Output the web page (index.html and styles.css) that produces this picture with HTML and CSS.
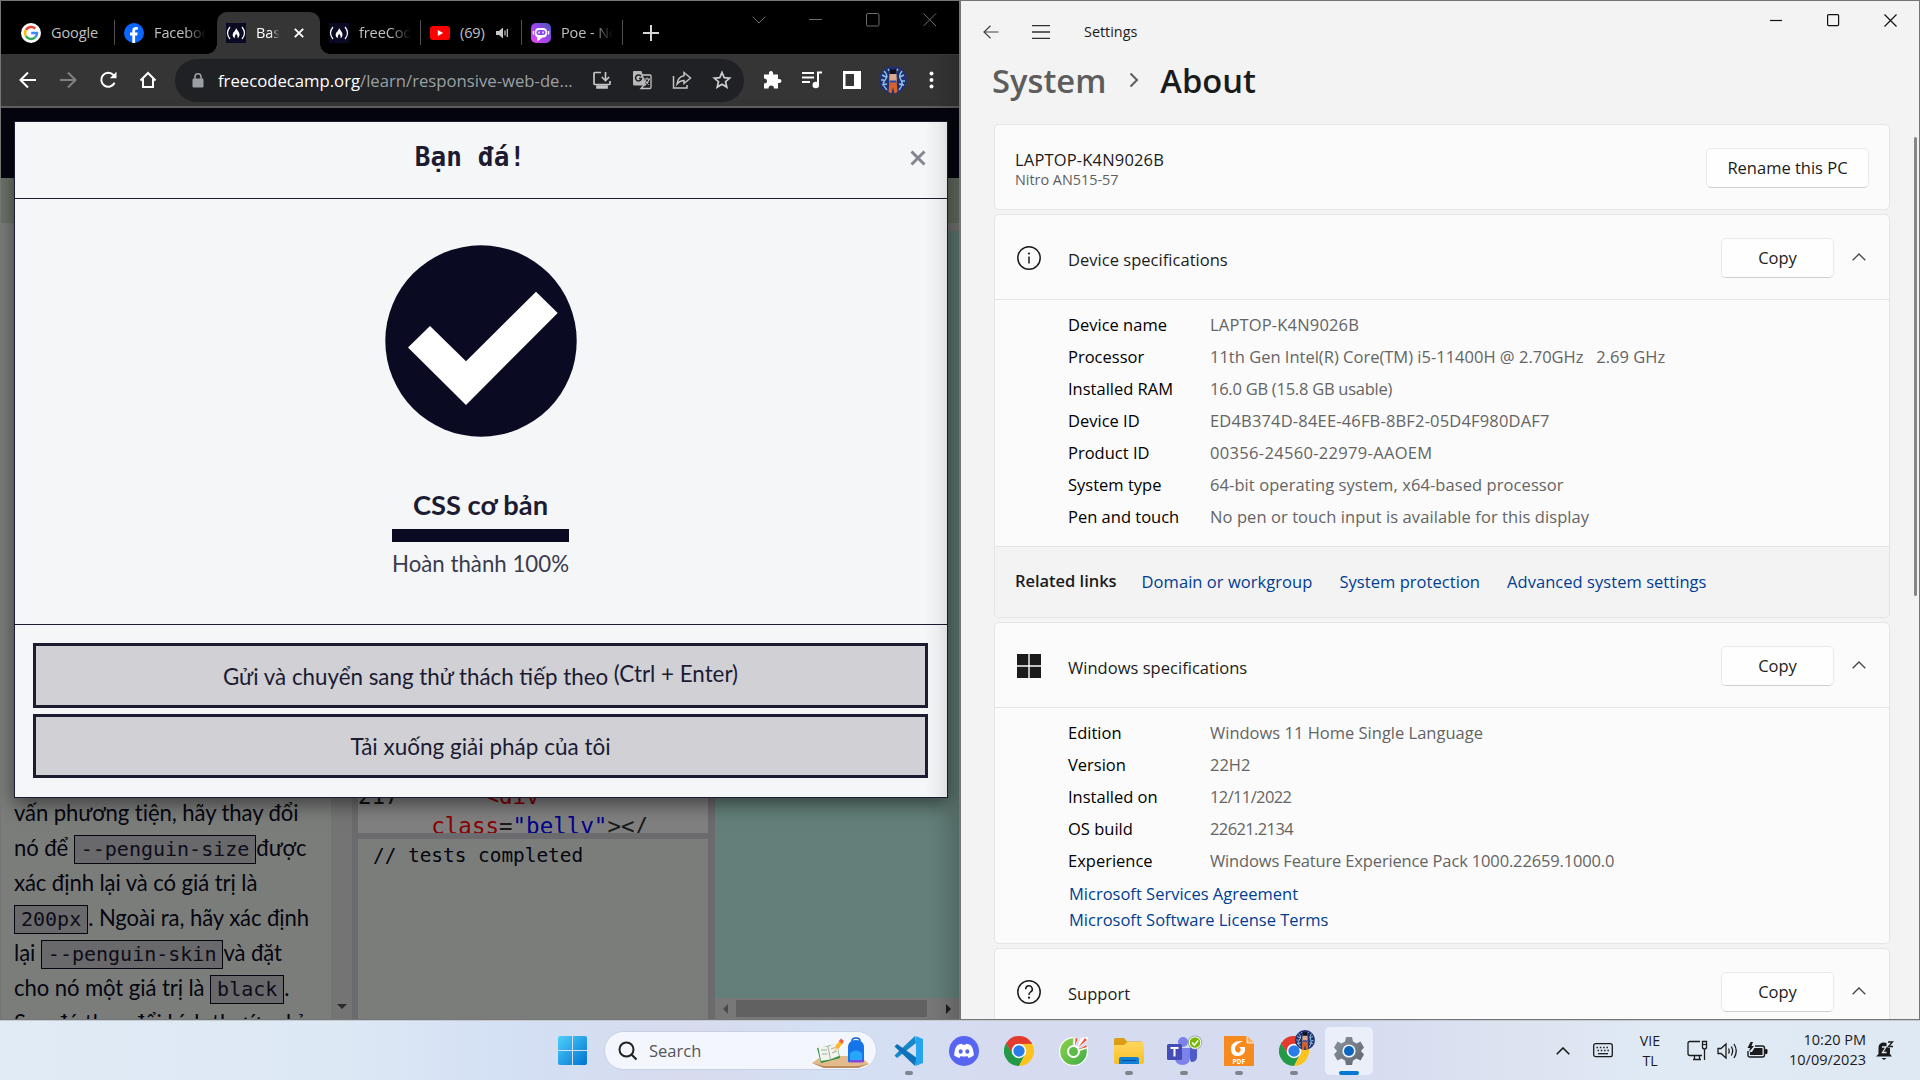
FILE: index.html
```html
<!DOCTYPE html>
<html lang="vi">
<head>
<meta charset="utf-8">
<title>Desktop</title>
<link rel="stylesheet" href="styles.css">
</head>
<body>
<svg width="0" height="0" class="defs">
  <defs>
    <linearGradient id="gWin" x1="0" y1="0" x2="1" y2="1"><stop offset="0" stop-color="#4fd0fb"/><stop offset="1" stop-color="#0072d1"/></linearGradient>
    <linearGradient id="gPoe" x1="0" y1="1" x2="1" y2="0"><stop offset="0" stop-color="#e94af5"/><stop offset=".5" stop-color="#9a45ee"/><stop offset="1" stop-color="#4757b5"/></linearGradient>
    <linearGradient id="gCoc" x1="0" y1="0" x2="1" y2="1"><stop offset="0" stop-color="#8fd14a"/><stop offset="1" stop-color="#3fae49"/></linearGradient>
    <linearGradient id="gFold" x1="0" y1="0" x2="0" y2="1"><stop offset="0" stop-color="#ffd75e"/><stop offset="1" stop-color="#f9bf26"/></linearGradient>
    <linearGradient id="gGear" x1="0" y1="0" x2="1" y2="1"><stop offset="0" stop-color="#8b949c"/><stop offset="1" stop-color="#5d666e"/></linearGradient>
    <symbol id="fcc" viewBox="0 0 20 20"><rect width="20" height="20" fill="#0a0a23"/><path d="M4 4Q-1 10 4 16M16 4Q21 10 16 16" fill="none" stroke="#fff" stroke-width="1.2"/><path d="M10 4.500C10.500 7 13.500 8.500 13.500 11.500C13.500 13.500 12.500 14.700 11.500 15.200C12.300 13 10.600 11.700 10 10.500C10 12 8.300 13 8.800 15.200C7.300 14.600 6.500 13.300 6.700 11.500C6.900 9 10 8 10 4.500Z" fill="#fff"/></symbol>
    <symbol id="chrome" viewBox="0 0 30 30"><path d="M2 7.500A15 15 0 0 1 28 7.500L15 8Z" fill="#e33b2e"/><path d="M2 7.500A15 15 0 0 0 15 30L21 18.500L15 22L8.900 18.500Z" fill="#229a48"/><path d="M28 7.500A15 15 0 0 1 15 30L21.100 18.500A7 7 0 0 0 21 11.500L15 8Z" fill="#fcc31e"/><path d="M15 7.800H28.200L27 6L3 6L2 7.500L8.900 18.500A7 7 0 0 1 15 7.800Z" fill="#e33b2e"/><path d="M2 7.500L8.900 18.500L13 22L9 25L1 19Z" fill="#229a48"/><circle cx="15" cy="15" r="7.200" fill="#fff"/><circle cx="15" cy="15" r="5.700" fill="#2a7de9"/></symbol>
    <symbol id="avatar" viewBox="0 0 28 28"><circle cx="14" cy="14" r="14" fill="#23306b"/><path d="M5 5Q10 10 6 14T8 24M23 5Q19 10 22 14T20 24M9 3L12 7M19 3L16 7M2 14H5M23 15H26M3 9L7 11M25 9L21 11M3 19L8 18M25 19L20 18" stroke="#8cc3ee" stroke-width="1.400" fill="none"/><path d="M10 5L12 2.500L14 4L16 2.500L18 5L16.500 8H11.500Z" fill="#0d1020"/><path d="M10.500 8H17.500L18 17H10Z" fill="#d9a98c"/><path d="M10.500 15H17.500L18.500 26L15.500 27.500L14 21L12.500 27.500L9.500 26Z" fill="#d7632b"/><path d="M10.500 14.500H17.500V16.500H10.500Z" fill="#2847a5"/></symbol>
    <symbol id="up" viewBox="0 0 14 8"><path d="M.7 7.300L7 1L13.300 7.300" fill="none" stroke="currentColor" stroke-width="1.300"/></symbol>
  </defs>
</svg>
<div class="desktop">

<section class="chrome">
  <div class="tabstrip">
    <div class="tab w103"><svg width="20" height="20" viewBox="0 0 20 20"><circle cx="10" cy="10" r="10" fill="#fff"/><path d="M4.900 6.900A6 6 0 0 1 14.300 5.700" stroke="#ea4335" stroke-width="2.400" fill="none"/><path d="M4.900 6.900A6 6 0 0 0 4.900 13.100" stroke="#fbbc05" stroke-width="2.400" fill="none"/><path d="M4.900 13.100A6 6 0 0 0 14 14.400" stroke="#34a853" stroke-width="2.400" fill="none"/><path d="M14 14.400A6 6 0 0 0 16 10H10.200" stroke="#4285f4" stroke-width="2.400" fill="none"/></svg><span class="t g">Google</span></div>
    <div class="tab w102 nosep"><svg width="20" height="20" viewBox="0 0 20 20"><circle cx="10" cy="10" r="10" fill="#0a66ff"/><path d="M8.300 20V12.500H6V9.500H8.300V7.800C8.300 5.200 9.600 4 11.900 4C12.800 4 13.400 4.100 13.800 4.200V6.800H12.500C11.500 6.800 11.100 7.300 11.100 8.200V9.500H13.700L13.200 12.500H11.100V20Z" fill="#fff"/></svg><span class="t fade">Facebook</span></div>
    <div class="tab w103 active"><svg width="20" height="20"><use href="#fcc"/></svg><span class="t fade short">Basic</span><svg class="tabx" width="10" height="10" viewBox="0 0 10 10"><path d="M.8 .8L9.200 9.200M9.200 .8L.8 9.200" stroke="#fff" stroke-width="1.900"/></svg></div>
    <div class="tab w101"><svg width="20" height="20"><use href="#fcc"/></svg><span class="t fade">freeCode</span></div>
    <div class="tab w101"><svg width="20" height="20" viewBox="0 0 20 20"><rect y="3" width="20" height="14" rx="3" fill="#f00"/><path d="M7.800 7V13L13.200 10Z" fill="#fff"/></svg><span class="t">(69)</span><svg class="spk" width="13" height="12" viewBox="0 0 13 12"><path d="M0 4H3L7 .5V11.500L3 8H0Z" fill="#c8c8c8"/><path d="M9 3.500V8.500M11.300 2V10" stroke="#c8c8c8" stroke-width="1.200"/></svg></div>
    <div class="tab w101"><svg width="20" height="20" viewBox="0 0 20 20"><rect width="20" height="20" rx="5" fill="url(#gPoe)"/><rect x="4" y="5" width="12" height="9.500" rx="4" fill="#fff"/><path d="M2.500 8V11.500M17.500 8V11.500M7 14V17L11 14" stroke="#fff" stroke-width="1.500" fill="#fff"/><rect x="5.500" y="7" width="9" height="5" rx="2.500" fill="#8a45ea"/><path d="M8 8.500V10.500M12 8.500V10.500" stroke="#fff" stroke-width="1.400"/></svg><span class="t fade">Poe - No</span></div>
    <svg class="plus" width="16" height="16" viewBox="0 0 16 16"><path d="M8 0V16M0 8H16" stroke="#d6d6d6" stroke-width="2"/></svg>
    <div class="ctl">
      <svg width="14" height="8" viewBox="0 0 14 8"><path d="M.7 .7L7 7L13.300 .7" fill="none" stroke="#6d6d6d"/></svg>
      <svg width="14" height="14" viewBox="0 0 14 14"><path d="M0 6.500H13" stroke="#6d6d6d"/></svg>
      <svg width="14" height="14" viewBox="0 0 14 14"><rect x=".5" y=".5" width="12.500" height="12.500" rx="1.500" fill="none" stroke="#6d6d6d"/></svg>
      <svg width="14" height="14" viewBox="0 0 14 14"><path d="M.5 .5L13 13M13 .5L.5 13" stroke="#6d6d6d"/></svg>
    </div>
  </div>
  <div class="toolbar">
    <svg class="n1" width="18" height="18" viewBox="0 0 18 18"><path d="M17 9H2M9 1.500L1.500 9L9 16.500" fill="none" stroke="#fff" stroke-width="2"/></svg>
    <svg class="n2" width="18" height="18" viewBox="0 0 18 18"><path d="M1 9H16M9 1.500L16.500 9L9 16.500" fill="none" stroke="#808080" stroke-width="2"/></svg>
    <svg class="n3" width="18" height="18" viewBox="0 0 18 18"><path d="M14.600 4.200A7 7 0 1 0 15.600 11.800" fill="none" stroke="#fff" stroke-width="2"/><path d="M17.500 .8V7.300H10.800Z" fill="#fff"/></svg>
    <svg class="n4" width="18" height="18" viewBox="0 0 18 18"><path d="M4 8V16H14V8M1.500 9.500L9 2L16.500 9.500" fill="none" stroke="#fff" stroke-width="2"/></svg>
    <div class="omni">
      <svg width="12" height="15" viewBox="0 0 12 15"><rect x=".5" y="5.500" width="11" height="9" rx="1.200" fill="#9aa0a6"/><path d="M3 6V3.800A3 3 0 0 1 9 3.800V6" fill="none" stroke="#9aa0a6" stroke-width="1.600"/></svg>
      <span class="url"><b>freecodecamp.org</b>/learn/responsive-web-de...</span>
      <div class="oicons">
        <svg width="20" height="20" viewBox="0 0 20 20" fill="none" stroke="#c4c4c4" stroke-width="1.700"><path d="M9 2.500H3Q2 2.500 2 3.500V13.500Q2 14.500 3 14.500H17Q18 14.500 18 13.500V11"/><path d="M13.500 2V10M9.800 7L13.500 10.500L17.200 7"/><path d="M5 16H15V18H5Z" fill="#c4c4c4"/></svg>
        <svg width="20" height="20" viewBox="0 0 20 20"><path d="M10 5H18Q19 5 19 6V17Q19 18.500 18 18.500H9L13 14Z" fill="none" stroke="#c4c4c4" stroke-width="1.300"/><path d="M2 1H9.500L14 15.500H2.500Q1 15.500 1 14V2Q1 1 2 1Z" fill="#b8b8b8"/><path d="M9 6.200A3 3 0 1 0 9.500 8.500H7" fill="none" stroke="#202124" stroke-width="1.500"/><path d="M12 9H18M15 7.500V9M13 10Q14 13 17 14.500M17 9.500Q16 13 13.500 14.500" fill="none" stroke="#c4c4c4" stroke-width="1.100"/></svg>
        <svg width="20" height="20" viewBox="0 0 20 20" fill="none" stroke="#c4c4c4" stroke-width="1.500"><path d="M1.500 6V18H15V15"/><path d="M12 2.500L18.500 8L12 13.500V10.500Q8 10.500 5 14Q6 6.500 12 5.700Z"/></svg>
        <svg width="20" height="20" viewBox="0 0 20 20"><path d="M10 2.500L12.200 7.600L17.700 8.100L13.500 11.700L14.800 17.100L10 14.200L5.200 17.100L6.500 11.700L2.300 8.100L7.800 7.600Z" fill="none" stroke="#d0d0d0" stroke-width="1.700"/></svg>
      </div>
    </div>
    <div class="ext">
      <svg width="20" height="20" viewBox="0 0 20 20"><path d="M2 4.500H7Q6.500 1 9 1Q11.500 1 11 4.500H16V9Q19.500 8.500 19.500 11Q19.500 13.500 16 13V18.500H12Q12 15.500 9.300 15.500Q6.500 15.500 6.500 18.500H2V13.500Q5 13.500 5 11Q5 8.500 2 8.500Z" fill="#fff"/></svg>
      <svg width="20" height="20" viewBox="0 0 20 20" fill="none" stroke="#fff" stroke-width="2"><path d="M0 3H12M0 7.500H12M0 12H8M16 15V2.500H20"/><circle cx="13.800" cy="15" r="2.300" fill="#fff"/></svg>
      <svg width="20" height="20" viewBox="0 0 20 20"><path d="M1 1H19V19H1Z" fill="#fff"/><path d="M3.500 4H12V16H3.500Z" fill="#353535"/></svg>
      <svg class="ava" width="28" height="28"><use href="#avatar"/></svg>
      <svg width="5" height="18" viewBox="0 0 5 18" fill="#fff"><circle cx="2.500" cy="2.500" r="2"/><circle cx="2.500" cy="9" r="2"/><circle cx="2.500" cy="15.500" r="2"/></svg>
    </div>
  </div>
  <div class="page">
    <div class="nav"></div>
    <div class="crumbs"></div>
    <div class="work">
      <div class="lesson">
        <p>vấn phương tiện, hãy thay đổi<br>nó để <code>--penguin-size</code>được<br>xác định lại và có giá trị là<br><code>200px</code>. Ngoài ra, hãy xác định<br>lại <code>--penguin-skin</code>và đặt<br>cho nó một giá trị là <code>black</code>.<br>Sau đó thay đổi kích thước chỉ</p>
      </div>
      <div class="vscroll"><svg width="10" height="6" viewBox="0 0 10 6"><path d="M0 0H10L5 5Z" fill="#2b2b2b"/></svg></div>
      <div class="editor">
        <pre class="code"><span class="ln">217</span>       <span class="r">&lt;div</span>
      <span class="a">class</span>=<span class="s">"belly"</span>&gt;&lt;/</pre>
        <pre class="console">// tests completed</pre>
      </div>
      <div class="preview">
        <div class="teal"></div>
        <div class="hscroll"><svg width="6" height="10" viewBox="0 0 6 10"><path d="M6 0V10L1 5Z" fill="#4a4a4a"/></svg><i></i><svg width="6" height="10" viewBox="0 0 6 10"><path d="M0 0V10L5 5Z" fill="#1d1d1d"/></svg></div>
      </div>
    </div>
    <div class="modal">
      <header><h2>Bạn đá!</h2><svg width="16" height="16" viewBox="0 0 16 16"><path d="M1.500 1.500L14.500 14.500M14.500 1.500L1.500 14.500" stroke="#858591" stroke-width="3"/></svg></header>
      <div class="mbody">
        <svg width="192" height="192" viewBox="0 0 192 192"><circle cx="96" cy="96" r="95.700" fill="#0a0a23"/><path d="M23 102.500L45 81L81 116.300L151 46.700L172.700 68L81 160Z" fill="#fff"/></svg>
        <h3>CSS cơ bản</h3>
        <div class="bar"></div>
        <p>Hoàn thành 100%</p>
      </div>
      <footer><button>Gửi và chuyển sang thử thách tiếp theo <span>(Ctrl + Enter)</span></button><button>Tải xuống giải pháp của tôi</button></footer>
    </div>
  </div>
  <div class="edge"></div>
</section>

<section class="settings">
  <div class="stitle">
    <svg width="16" height="14" viewBox="0 0 16 14"><path d="M15.500 7H1M7.500 .7L1 7L7.500 13.300" fill="none" stroke="#444" stroke-width="1.200"/></svg>
    <svg class="burger" width="18" height="14" viewBox="0 0 18 14"><path d="M0 .7H18M0 7H18M0 13.300H18" stroke="#333" stroke-width="1.300"/></svg>
    <span>Settings</span>
    <div class="sctl">
      <svg width="13" height="13" viewBox="0 0 13 13"><path d="M0 6.500H12" stroke="#111" stroke-width="1.200"/></svg>
      <svg width="13" height="13" viewBox="0 0 13 13"><rect x=".6" y=".6" width="11" height="11" rx="1" fill="none" stroke="#111" stroke-width="1.200"/></svg>
      <svg width="13" height="13" viewBox="0 0 13 13"><path d="M.5 .5L12.500 12.500M12.500 .5L.5 12.500" stroke="#111" stroke-width="1.200"/></svg>
    </div>
  </div>
  <h1><span class="sys">System</span><svg width="10" height="16" viewBox="0 0 10 16"><path d="M1.500 1.500L8 8L1.500 14.500" fill="none" stroke="#5d5d5d" stroke-width="2"/></svg><span>About</span></h1>
  <div class="card name"><div><div class="n">LAPTOP-K4N9026B</div><div class="m">Nitro AN515-57</div></div><div class="btn rename">Rename this PC</div></div>
  <div class="card dev">
    <div class="head"><svg width="24" height="24" viewBox="0 0 24 24"><circle cx="12" cy="12" r="11.200" fill="none" stroke="#1b1b1b" stroke-width="1.500"/><path d="M12 10.500V17.500" stroke="#1b1b1b" stroke-width="1.500"/><circle cx="12" cy="7.500" r="1.100" fill="#1b1b1b"/></svg><span>Device specifications</span><div class="btn">Copy</div><svg class="up" width="14" height="8"><use href="#up"/></svg></div>
    <dl>
      <dt>Device name</dt><dd class="wide1">LAPTOP-K4N9026B</dd>
      <dt>Processor</dt><dd>11th Gen Intel(R) Core(TM) i5-11400H @ 2.70GHz &nbsp; 2.69 GHz</dd>
      <dt>Installed RAM</dt><dd class="tight2">16.0 GB (15.8 GB usable)</dd>
      <dt>Device ID</dt><dd class="wide1">ED4B374D-84EE-46FB-8BF2-05D4F980DAF7</dd>
      <dt>Product ID</dt><dd class="wide2">00356-24560-22979-AAOEM</dd>
      <dt>System type</dt><dd class="wide0">64-bit operating system, x64-based processor</dd>
      <dt>Pen and touch</dt><dd class="wide0">No pen or touch input is available for this display</dd>
    </dl>
    <div class="links"><b>Related links</b><a>Domain or workgroup</a><a>System protection</a><a>Advanced system settings</a></div>
  </div>
  <div class="card win">
    <div class="head"><svg width="24" height="24" viewBox="0 0 24 24" fill="#1b1b1b"><path d="M0 0H11.300V11.300H0ZM12.700 0H24V11.300H12.700ZM0 12.700H11.300V24H0ZM12.700 12.700H24V24H12.700Z"/></svg><span>Windows specifications</span><div class="btn">Copy</div><svg class="up" width="14" height="8"><use href="#up"/></svg></div>
    <dl>
      <dt>Edition</dt><dd>Windows 11 Home Single Language</dd>
      <dt>Version</dt><dd>22H2</dd>
      <dt>Installed on</dt><dd class="tight3">12/11/2022</dd>
      <dt>OS build</dt><dd class="tight3">22621.2134</dd>
      <dt>Experience</dt><dd class="tight1">Windows Feature Experience Pack 1000.22659.1000.0</dd>
    </dl>
    <div class="terms"><a>Microsoft Services Agreement</a><a>Microsoft Software License Terms</a></div>
  </div>
  <div class="card sup">
    <div class="head"><svg width="24" height="24" viewBox="0 0 24 24"><circle cx="12" cy="12" r="11.200" fill="none" stroke="#1b1b1b" stroke-width="1.500"/><path d="M8.700 9.300A3.300 3.300 0 1 1 13.500 12Q12 13 12 15" fill="none" stroke="#1b1b1b" stroke-width="1.500"/><circle cx="12" cy="17.700" r="1.100" fill="#1b1b1b"/></svg><span>Support</span><div class="btn">Copy</div><svg class="up" width="14" height="8"><use href="#up"/></svg></div>
  </div>
  <div class="sbar"></div>
</section>

<nav class="taskbar">
  <svg class="start" width="29" height="29" viewBox="0 0 29 29" fill="url(#gWin)"><path d="M2 0H14V14H0V2Q0 0 2 0ZM15 0H27Q29 0 29 2V14H15ZM0 15H14V29H2Q0 29 0 27ZM15 15H29V27Q29 29 27 29H15Z"/></svg>
  <div class="search">
    <svg width="20" height="20" viewBox="0 0 20 20"><circle cx="8.500" cy="8.500" r="7" fill="none" stroke="#222" stroke-width="2"/><path d="M13.500 13.500L18.500 18.500" stroke="#222" stroke-width="2.200"/></svg>
    <span>Search</span>
    <svg class="art" width="58" height="32" viewBox="0 0 58 32"><path d="M0 26L10 19H48L57 27L46 31H12Z" fill="#e3ba8c"/><path d="M0 26L12 29H46L57 27L46 31H12Z" fill="#bd8a5c"/><path d="M5 11L9 26L28 21L25 7Z" fill="#2e8f46"/><path d="M6 9L16 9.500L25 6L27 19L18 22.500L9 24Z" fill="#f4f4ee"/><path d="M16 9.500L18.500 22.500M9 13L15 13M10 17L15.500 17M19 12L24 10M20 16L25 14" stroke="#9aa39c" stroke-width=".9"/><path d="M21 15L23 9.500L26 12.500Z" fill="#f7d7a5"/><path d="M23 9.500L28 3L31 6L26 12.500Z" fill="#fbb829"/><path d="M27 4L29 1.500L32 4L30 7Z" fill="#f25b4e"/><path d="M36 25V11Q36 3 44 3Q52 3 52 11V25Z" fill="#1474e8"/><path d="M40 4Q40 1 44 1Q48 1 48 4" stroke="#0b5ed0" fill="none" stroke-width="1.500"/><path d="M38 16Q44 11 50 16V23H38Z" fill="#27a7fb"/><path d="M37 23H51V25.500H37Z" fill="#8448e0"/></svg>
  </div>
  <div class="apps">
    <div class="app run"><svg width="30" height="30" viewBox="0 0 30 30"><path d="M21 0L3.500 16.500L.5 19.500L3 22L22 7Z" fill="#1687c9"/><path d="M3 8L.5 10.500L21 30L23 22Z" fill="#0e70b8"/><path d="M21.500 0L29 3V27L21.500 30L22 22V8Z" fill="#27a4ee"/></svg></div>
    <div class="app"><svg width="30" height="30" viewBox="0 0 30 30"><circle cx="15" cy="15" r="15" fill="#5865f2"/><path d="M8 9.500Q10 8 13 7.700L13.600 8.800H16.400L17 7.700Q20 8 22 9.500Q25 14 24.700 19.500Q22.500 21.300 19.500 22L18.300 20Q15 21 11.700 20L10.500 22Q7.500 21.300 5.300 19.500Q5 14 8 9.500Z" fill="#fff"/><ellipse cx="11.700" cy="15.500" rx="2" ry="2.200" fill="#5865f2"/><ellipse cx="18.300" cy="15.500" rx="2" ry="2.200" fill="#5865f2"/></svg></div>
    <div class="app"><svg width="30" height="30"><use href="#chrome"/></svg></div>
    <div class="app"><svg width="30" height="30" viewBox="0 0 30 30"><circle cx="14.500" cy="15.500" r="14.500" fill="#fff"/><circle cx="14.500" cy="15.500" r="13.300" fill="url(#gCoc)"/><path d="M13.500 14L14 0H30V10Z" fill="#d8dcef"/><path d="M14.500 13L15.500 1.500L20 2.500ZM17 14L22 2L29 1L29 4ZM18 16L27 8L29 12Z" fill="#fff"/><path d="M16 10L16.500 2L19 2.500ZM19 11.500L26 2L28 4ZM21 13L27 9L28 11Z" fill="#f0563c"/><circle cx="14.500" cy="15.500" r="6.500" fill="#fff"/><circle cx="14.500" cy="15.500" r="4.500" fill="#5dbb49"/></svg></div>
    <div class="app run"><svg width="30" height="30" viewBox="0 0 30 30"><path d="M0 4Q0 2 2 2H10L13 5.500H28V16H0Z" fill="#dd9d12"/><path d="M0 9H10L13.500 6H28Q30 6 30 8V26Q30 28 28 28H2Q0 28 0 26Z" fill="url(#gFold)"/><path d="M5 28V23Q5 21 7 21H23Q25 21 25 23V28Z" fill="#1080d6"/><path d="M8 24.500H22" stroke="#0a4f8f"/></svg></div>
    <div class="app run"><svg width="36" height="32" viewBox="0 0 36 32"><circle cx="17" cy="7" r="5" fill="#7b83eb"/><circle cx="27" cy="9" r="4" fill="#5059c9"/><path d="M20 13H31V22Q31 27 25 27Z" fill="#5059c9"/><path d="M9 13H24V22Q24 30 16.500 30Q9 30 9 22Z" fill="#7b83eb"/><rect x="1" y="9" width="15" height="16" rx="1.500" fill="#454cb5"/><path d="M4.500 13H12.500M8.500 13V21.500" stroke="#fff" stroke-width="2"/><circle cx="29" cy="7.500" r="7" fill="#8c929c"/><circle cx="29" cy="7.500" r="6.300" fill="#fff"/><circle cx="29" cy="7.500" r="5.300" fill="#76b900"/><path d="M26 7.500L28.300 10L32.200 5.500" fill="none" stroke="#fff" stroke-width="1.500"/></svg></div>
    <div class="app run"><svg width="30" height="30" viewBox="0 0 30 30"><path d="M0 0H23L30 7V30H0Z" fill="#f68a1f"/><path d="M23 0V7H30" fill="#f9ae62" stroke="#fff" stroke-width=".8"/><path d="M19 5Q7 4 7 13Q7 21 15 20Q22 19 21 11H15Q18 13 16 16Q12 18 11 13Q11 8 19 5Z" fill="#fff"/><text x="8.500" y="27.500" class="pdf">PDF</text></svg></div>
    <div class="app run"><svg class="duo" width="36" height="36" viewBox="0 0 36 36"><use href="#chrome" x="0" y="6" width="30" height="30"/><use href="#avatar" x="16" y="0" width="20" height="20"/></svg></div>
    <div class="app on"><svg width="30" height="30" viewBox="0 0 30 30"><path d="M12 1H18L19 5.500L22.500 7.500L26.500 5.500L30 11.500L27 15L30 18.500L26.500 24.500L22.500 22.500L19 24.500L18 29H12L11 24.500L7.500 22.500L3.500 24.500L0 18.500L3 15L0 11.500L3.500 5.500L7.500 7.500L11 5.500Z" fill="url(#gGear)"/><circle cx="15" cy="15" r="6.600" fill="#eef3fb"/><circle cx="15" cy="15" r="5" fill="#0f65bd"/></svg></div>
  </div>
  <div class="tray">
    <svg class="tup" width="14" height="8" viewBox="0 0 14 8"><path d="M.7 7.300L7 1L13.300 7.300" fill="none" stroke="#1b1b1b" stroke-width="1.600"/></svg>
    <svg class="kb" width="20" height="15" viewBox="0 0 20 15"><rect x=".7" y=".7" width="18.600" height="13" rx="2" fill="none" stroke="#1b1b1b" stroke-width="1.300"/><path d="M3.500 4.500H16.500M4.500 7.500H16" stroke="#1b1b1b" stroke-width="1.500" stroke-dasharray="1.500 1.800"/><path d="M5 10.700H15" stroke="#1b1b1b" stroke-width="1.300"/></svg>
    <div class="lang">VIE<br>TL</div>
    <svg class="mon" width="21" height="21" viewBox="0 0 21 21"><path d="M13 1.500H3Q1 1.500 1 3.500V13.500Q1 15.500 3 15.500H15M6 19.500H14M7.500 16V19M12.500 16V19M17.500 9V20M15.500 1.500H19.500V7Q19.500 9 17.500 9Q15.500 9 15.500 7Z" fill="none" stroke="#1b1b1b" stroke-width="1.300"/><path d="M15.500 4.500H19.500" stroke="#1b1b1b"/></svg>
    <svg class="vol" width="21" height="18" viewBox="0 0 21 18" fill="none" stroke="#1b1b1b" stroke-width="1.300"><path d="M1 6.500H4L9 2V16L4 11.500H1Z"/><path d="M11.500 6.500Q13 9 11.500 11.500M14.300 4.500Q17 9 14.300 13.500M17 2Q21.500 9 17 16"/></svg>
    <svg class="bat" width="21" height="17" viewBox="0 0 21 17"><path d="M8 4H15.500Q17.500 4 17.500 6V13Q17.500 15 15.500 15H3Q1 15 1 13V9" fill="none" stroke="#1b1b1b" stroke-width="1.400"/><path d="M7.500 6H15.500V13H3V10H5Z" fill="#1b1b1b"/><path d="M18.500 7.500H20V11.500H18.500Z" stroke="#1b1b1b"/><path d="M3.500 0L.5 6H3L2 10L7 4H4.500L6 0Z" fill="#1b1b1b"/></svg>
    <div class="clock">10:20 PM<br>10/09/2023</div>
    <svg class="bell" width="18" height="19" viewBox="0 0 18 19"><path d="M2.500 13V7Q2.500 1.500 8 1.500Q9.500 1.500 10.500 2V6L14 7V13L16 15.500H0Z" fill="#1b1b1b"/><path d="M5.500 17H10.500L8 19Z" fill="#1b1b1b"/><path d="M6 6H10L6.500 11.500H10.500" fill="none" stroke="#e0eaf4" stroke-width="1.300"/><path d="M12 1H16.500L12.500 5.500H17" fill="none" stroke="#1b1b1b" stroke-width="1.300"/></svg>
  </div>
</nav>
</div>
</body>
</html>
```
FILE: styles.css
```css
* { box-sizing: border-box; margin: 0; padding: 0; }
body { width: 1920px; height: 1080px; overflow: hidden; font-family: "Open Sans", "Noto Sans", sans-serif; }
svg { display: block; flex: none; }
.defs { position: absolute; }
.desktop { display: grid; grid-template: 1020px 60px / 960px 960px; }

/* browser window */
.chrome { position: relative; display: grid; grid-template-rows: 53px 54px 1fr; border: 1px solid #757575; background: #000; overflow: hidden; min-height: 0; }
.tabstrip { display: flex; padding: 11px 0 0 11px; background: #000; }
.tab { display: flex; align-items: center; height: 42px; padding-left: 9px; position: relative; color: #c0c0c0; font-size: 14.500px; }
.tab::after { content: ""; width: 1px; height: 25px; background: #4f4f4f; position: absolute; right: 0; top: 8px; }
.nosep::after, .active::after { display: none; }
.w101 { width: 101px; } .w102 { width: 102px; } .w103 { width: 103px; }
.active { background: #353535; border-radius: 10px 10px 0 0; color: #fff; }
.active::before { content: ""; position: absolute; left: -10px; right: -10px; bottom: 0; height: 10px; background: radial-gradient(circle at 0 0, transparent 9.500px, #353535 10px) left / 10px 10px no-repeat, radial-gradient(circle at 100% 0, transparent 9.500px, #353535 10px) right / 10px 10px no-repeat; }
.tab .t { margin: -2px 0 0 10px; width: 52px; white-space: nowrap; overflow: hidden; letter-spacing: -.1px; }
.tab .fade { -webkit-mask-image: linear-gradient(90deg, #000 60%, transparent 100%); mask-image: linear-gradient(90deg, #000 60%, transparent 100%); }
.tab .short { width: 24px; }
.tabx { margin-left: 14px; }
.tab .spk { margin-left: -16px; }
.plus { margin: 13px 0 0 20px; }
.ctl { display: flex; align-items: center; gap: 43px; margin: -9px 22px 0 auto; height: 34px; }
.toolbar { display: flex; align-items: center; background: #353535; border-bottom: 2px solid #5e5e5e; padding: 0 25px 0 18px; }
.n2, .n3, .n4 { margin-left: 22px; }
.omni { display: flex; align-items: center; width: 569px; height: 43px; margin-left: 18px; padding: 0 12px 0 17px; border-radius: 22px; background: #202124; }
.url { margin-left: 14px; width: 359px; font-size: 16.700px; color: #9aa0a6; white-space: nowrap; }
.url b { color: #fff; font-weight: 400; }
.oicons { display: flex; gap: 20px; margin-left: 15px; }
.ext { display: flex; align-items: center; gap: 20px; margin-left: 18px; }
.ava { margin: 0 2px 0 -3px; }
.page { position: relative; display: grid; grid-template-rows: 70px 45px 1fr; min-height: 0; background: #6a6a6d; }
.nav { background: #05050f; }
.crumbs { background: #6b7468; }
.work { display: grid; grid-template-columns: 330px 21px 356px 251px; min-height: 0; background: #7b7d7b; }
.lesson { overflow: hidden; padding: 572px 0 0 13px; height: 796px; }
.lesson p { width: 330px; white-space: nowrap; font: 22.100px/35px Lato, "Noto Sans", sans-serif; letter-spacing: -.08px; color: #05050f; }
.lesson code { font: 20px/28px "DejaVu Sans Mono", monospace; letter-spacing: 0; color: #0d0d19; background: #69686b; border: 1px solid #05050f; padding: 1px 6px 2px; }
.vscroll { background: #757474; display: flex; align-items: flex-end; justify-content: center; padding-bottom: 9px; }
.editor { border: solid #6b6a6d; border-width: 0 0 0 6px; display: grid; grid-template-rows: 610px 1fr; background: #6b6a6d; min-height: 0; }
.code { background: #808080; overflow: hidden; padding-top: 558px; font: 22.500px/30px "DejaVu Sans Mono", monospace; color: #1a1a1a; height: 610px; text-indent: 0; }
.ln { color: #111; } .r, .a { margin-left: -8px; } .r { color: #800000; } .a { color: #8a0000; } .s { color: #00008a; }
.console { background: #7b7d7b; margin-top: 6px; padding: 5px 0 0 15px; font: 19.400px/24px "DejaVu Sans Mono", monospace; color: #05050f; }
.preview { border-left: 7px solid #6b6a6d; display: grid; grid-template-rows: 1fr 21px; }
.teal { background: #637f79; border-top: 8px solid #7b7d7b; }
.hscroll { background: #787878; display: flex; align-items: center; justify-content: space-between; padding: 0 7px 0 7px; }
.hscroll i { width: 191px; height: 17px; background: #616161; margin: 0 12px 0 0; }

/* completion dialog */
.modal { position: absolute; left: 13px; top: 13px; width: 934px; height: 677px; display: grid; grid-template-rows: 77px 426px 1fr; background: #f5f6f7; border: 1px solid #1b1b32; box-shadow: 0 6px 18px rgba(0,0,0,.5); color: #1b1b32; }
.modal header { display: flex; align-items: center; border-bottom: 1px solid #1b1b32; padding-right: 21px; padding-bottom: 6px; }
.modal h2 { flex: 1; text-align: center; font: bold 26px/34px "DejaVu Sans Mono", monospace; letter-spacing: .1px; padding-left: 15px; }
.modal header svg { margin-top: 2px; }
.mbody { display: flex; flex-direction: column; align-items: center; border-bottom: 1px solid #1b1b32; padding-top: 46px; font-family: Lato, "Noto Sans", sans-serif; }
.mbody h3 { font-size: 27.300px; line-height: 32px; margin-top: 52px; white-space: nowrap; padding-right: 1px; }
.bar { width: 177px; height: 13px; margin: 8px 1px 0 0; background: #0a0a23; }
.mbody p { font-size: 22.250px; line-height: 28px; margin-top: 8px; padding-right: 1px; color: #3b3b4f; white-space: nowrap; }
.modal footer { display: flex; flex-direction: column; gap: 6px; padding: 18px 19px 0 18px; }
.modal button { height: 65px; border: 3px solid #1b1b32; background: #d0d0d5; color: #1b1b32; font: 22.350px Lato, "Noto Sans", sans-serif; padding-top: 1px; }
.modal button + button { height: 64px; font-size: 22.500px; }
.modal button span { position: relative; top: -3px; }
.edge { position: absolute; right: 0; top: 54px; bottom: 0; width: 34px; background: linear-gradient(90deg, transparent, rgba(0,0,0,.04) 40%, rgba(0,0,0,.17)); }

/* settings window */
.settings { position: relative; border: 1px solid #757575; background: #f3f3f3; overflow: hidden; padding-left: 33px; color: #1b1b1b; font-size: 16.500px; white-space: nowrap; min-height: 0; }
.stitle { display: flex; align-items: center; height: 50px; margin-left: -11px; padding-top: 11px; font-size: 14.400px; }
.burger { margin-left: 33px; }
.stitle span { margin: -1px 0 0 34px; }
.sctl { display: flex; gap: 44px; margin: -22px 22px 0 auto; }
.settings h1 { display: flex; align-items: center; height: 58px; font-size: 32.700px; font-weight: 600; margin-left: -2px; }
.settings h1 svg { margin: 0 21px 0 23px; }
.sys { color: #5d5d5d; }
.card { width: 896px; background: #fbfbfb; border: 1px solid #e5e5e5; border-radius: 5px; margin-bottom: 4px; overflow: hidden; }
.settings h1 + .card { margin-top: 15px; }
.btn { width: 113px; height: 40px; background: #fefefe; border: 1px solid #e9e9e9; border-bottom-color: #cfcfcf; border-radius: 5px; text-align: center; line-height: 38px; margin-left: auto; }
.btn.rename { width: 163px; }
.name { display: flex; align-items: center; height: 86px; padding: 2px 20px 0; }
.name .n { line-height: 21px; margin-top: 2px; letter-spacing: .17px; }
.name .m { line-height: 20px; font-size: 14.400px; color: #5f5f5f; }
.head { display: flex; align-items: center; height: 85px; padding: 2px 23px 0 22px; border-bottom: 1px solid #e5e5e5; }
.head span { margin: 2px 0 0 27px; letter-spacing: .03px; }
.up { margin: -2px 0 0 18px; color: #444; }
.dev { height: 404px; }
dl { display: grid; grid-template-columns: 142px 1fr; grid-auto-rows: 32px; align-items: center; padding: 8px 0 0 73px; }
dt { color: #000; } dd { color: #646464; }
.wide0 { letter-spacing: .08px; } .wide1 { letter-spacing: .17px; } .wide2 { letter-spacing: .32px; }
.tight1 { letter-spacing: -.15px; } .tight2 { letter-spacing: -.25px; } .tight3 { letter-spacing: -.62px; }
.dev dl { height: 246px; }
.links { display: flex; align-items: center; height: 72px; padding: 0 20px 3px; background: #f3f3f3; border-top: 1px solid #e5e5e5; letter-spacing: .05px; }
.links b { font-weight: 600; margin: -1px 25px 0 0; letter-spacing: -.03px; }
.links a { margin-right: 27px; }
a { color: #003e92; }
.win { height: 322px; }
.terms { padding: 5px 0 0 74px; }
.terms a { display: block; line-height: 26px; }
.sup { height: 90px; }
.sbar { position: absolute; right: 2px; top: 136px; width: 3px; height: 459px; background: #868686; border-radius: 2px; }

/* taskbar */
.taskbar { grid-column: 1 / 3; display: flex; align-items: center; border-top: 1px solid #c3cad4; background: linear-gradient(90deg, #e1ebf5 0, #dde8f5 18%, #d3dff4 27%, #d8dbee 36%, #d4e0f4 43%, #d6dbf0 52%, #d5dcf0 70%, #dde3f0 79%, #dfeaf5 86%, #dfe9f4 100%); color: #1b1b1b; }
.start { margin-left: 558px; }
.search { display: flex; align-items: center; width: 273px; height: 39px; margin-left: 17px; padding: 0 6px 0 13px; border-radius: 20px; background: #f3f6fc; border: 1px solid #c9d1e6; font-size: 16.500px; color: #555; }
.search span { margin: -1px 0 0 11px; }
.art { margin: 4px 0 0 auto; }
.apps { display: flex; gap: 7px; margin-left: 8px; }
.app { position: relative; display: flex; align-items: center; justify-content: center; width: 48px; height: 48px; border-radius: 5px; }
.app .duo { margin: -6px 0 0 6px; }
.run::after, .on::after { content: ""; position: absolute; bottom: 0; left: 20px; width: 8px; height: 4px; border-radius: 2px; background: #80858c; }
.on { background: #eaeffa; }
.on::after { left: 14px; width: 20px; background: #0078d4; }
.pdf { font: bold 6.500px "Open Sans", sans-serif; fill: #fff; }
.tray { display: flex; align-items: center; margin-left: 183px; font-size: 14.200px; line-height: 20px; }
.kb { margin-left: 23px; }
.lang { margin-left: 26px; width: 22px; display: flex; flex-direction: column; text-align: center; white-space: nowrap; }
.mon { margin-left: 26px; }
.vol { margin-left: 9px; }
.bat { margin-left: 9px; }
.clock { width: 90px; margin: -2px 0 0 8px; text-align: right; white-space: nowrap; font-size: 14.500px; }
.bell { margin-left: 10px; }
```
